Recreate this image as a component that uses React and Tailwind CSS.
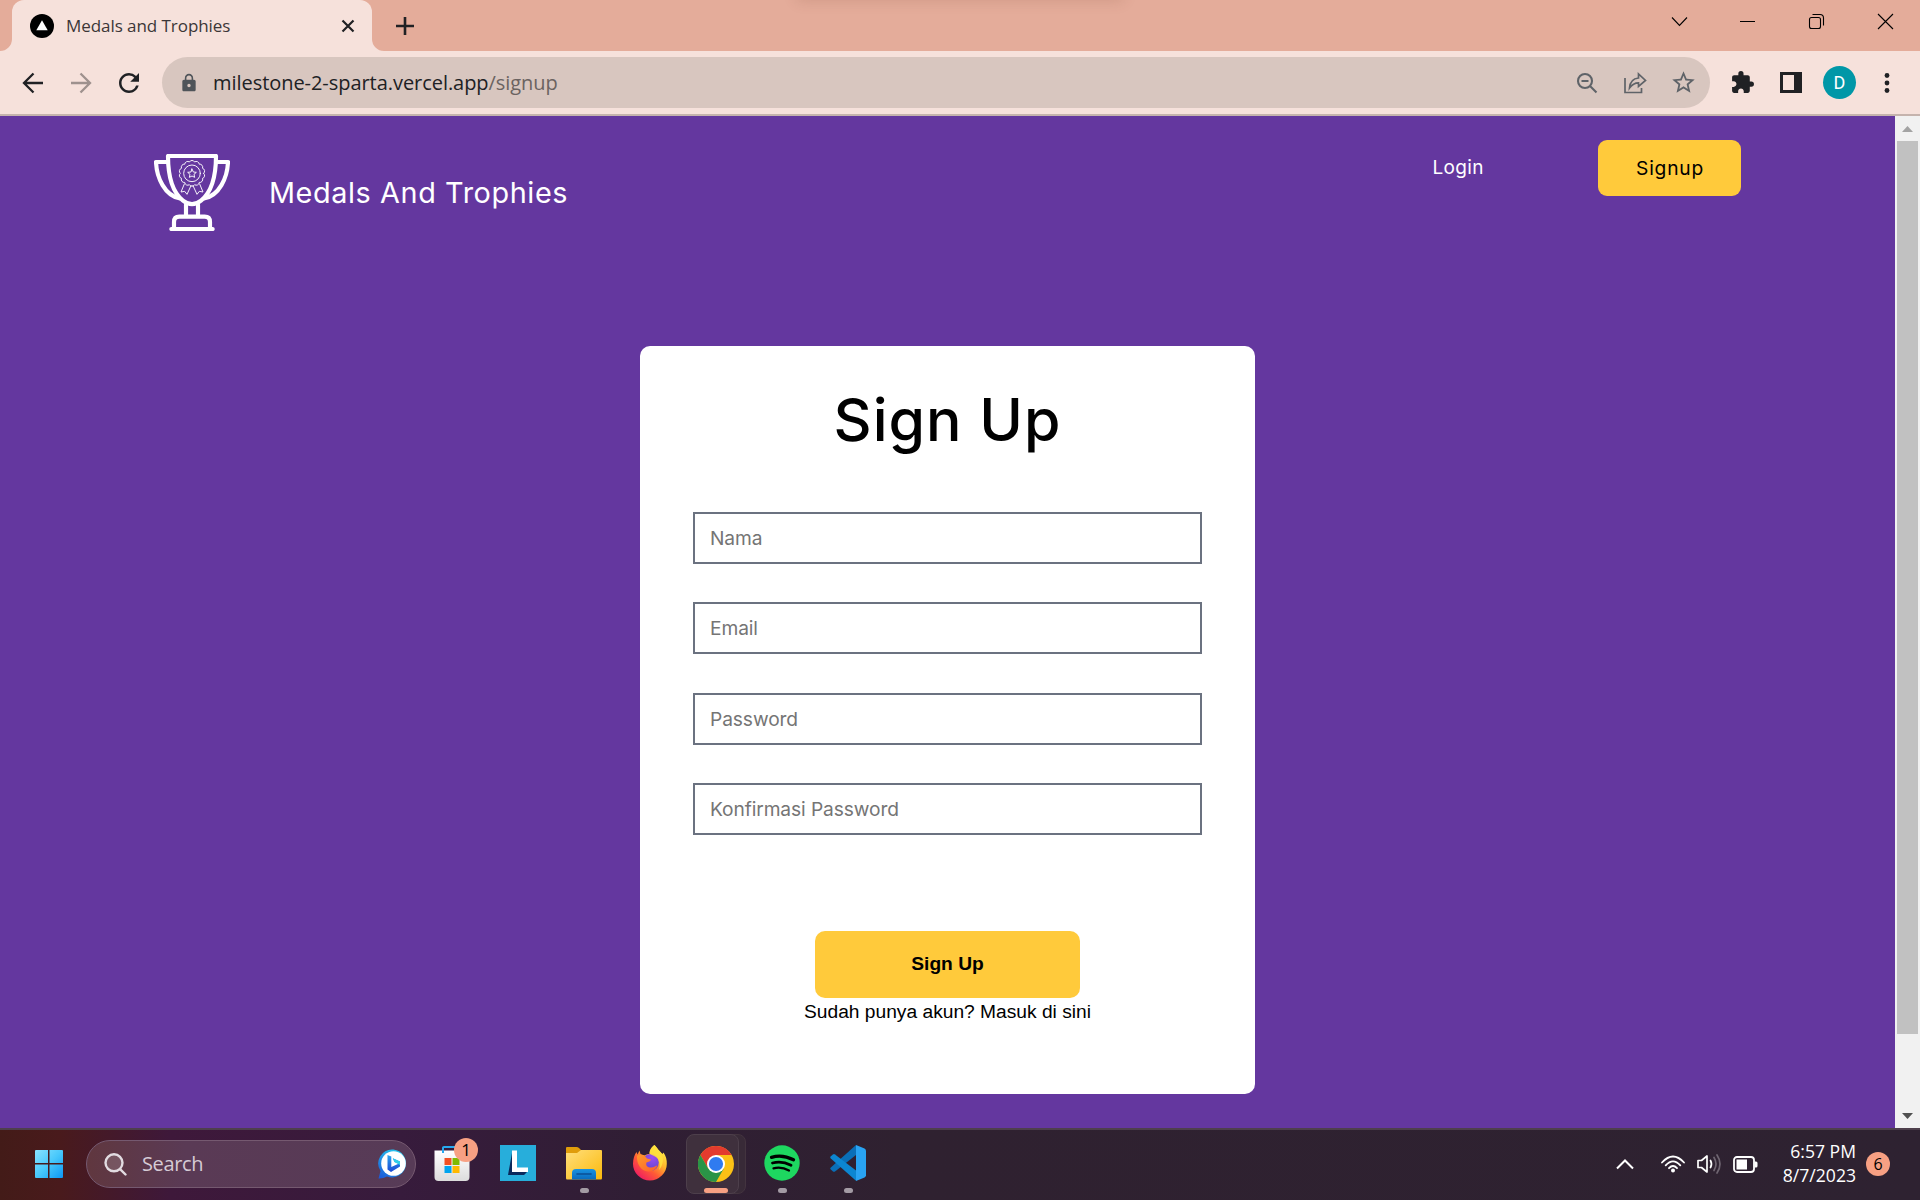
import React from "react";
import { MdExtension, MdLock, MdStarBorder, MdRefresh } from "react-icons/md";

function Stroke({ d, box, className, w = 2 }) {
  return (
    <svg viewBox={box} className={className} fill="none" stroke="currentColor" strokeWidth={w}>
      <path d={d} />
    </svg>
  );
}

function TitleBar() {
  return (
    <div className="relative flex h-[51px] shrink-0 overflow-hidden bg-[#e4ac9a] text-[#202124]">
      <div className="absolute -top-[12px] left-[800px] h-[10px] w-[320px] shadow-[0_0_14px_3px_rgba(120,70,50,0.18)]" />
      <svg viewBox="0 0 12 12" className="h-3 w-3 self-end fill-[#f6e1db]">
        <path d="M12 0V12H0A12 12 0 0 0 12 0Z" />
      </svg>
      <div className="flex w-[360px] items-center rounded-t-xl bg-[#f6e1db] pl-[18px] pr-[17px]">
        <svg viewBox="0 0 24 24" className="h-6 w-6">
          <circle cx="12" cy="12" r="12" />
          <path d="M12 6.3 17.7 16.2H6.3Z" fill="#fff" />
        </svg>
        <span className="ml-3 grow whitespace-nowrap text-[17px] leading-6 tracking-[-0.06px] text-[#3b3637]">
          Medals and Trophies
        </span>
        <Stroke box="0 0 14 14" className="h-[14px] w-[14px]" w={2.2} d="M1.5 1.5 12.5 12.5M12.5 1.5 1.5 12.5" />
      </div>
      <svg viewBox="0 0 12 12" className="h-3 w-3 self-end fill-[#f6e1db]">
        <path d="M0 0V12H12A12 12 0 0 1 0 0Z" />
      </svg>
      <Stroke box="0 0 18 18" className="ml-3 mt-[17px] h-[18px] w-[18px]" w={2.6} d="M9 0V18M0 9H18" />
      <div className="ml-auto flex pr-[26px] pt-[13px] text-black">
        <Stroke box="0 0 17 17" className="mr-[51px] h-[17px] w-[17px]" w={1.1} d="M1 4.500 8.500 12.500 16 4.500" />
        <Stroke box="0 0 17 17" className="mr-[52px] h-[17px] w-[17px]" w={1} d="M1 8.500H16" />
        <Stroke
          box="0 0 17 17"
          className="mr-[52px] h-[17px] w-[17px]"
          w={1.1}
          d="M3.5 4.5H10.5Q12.5 4.5 12.5 6.5V13.5Q12.5 15.5 10.5 15.5H3.5Q1.5 15.5 1.5 13.5V6.5Q1.5 4.5 3.5 4.5ZM4.5 1.5H12Q15.5 1.5 15.5 5V12.5"
        />
        <Stroke box="0 0 17 17" className="h-[17px] w-[17px]" w={1.1} d="M1 1 16 16M16 1 1 16" />
      </div>
    </div>
  );
}

function Toolbar() {
  return (
    <div className="flex h-[65px] shrink-0 items-center border-b-2 border-[#c5b3ad] bg-[#f6e1db] pl-[22px] text-[#202124]">
      <Stroke box="0 0 22 22" className="h-[22px] w-[22px]" w={2.3} d="M21 11H2.5M11.5 1.5 2 11 11.5 20.5" />
      <Stroke box="0 0 22 22" className="ml-[26px] h-[22px] w-[22px] text-[#9e918e]" w={2.3} d="M1 11H19.5M10.5 1.5 20 11 10.5 20.5" />
      <MdRefresh className="ml-[22px] h-[30px] w-[30px]" />
      <div className="ml-[18px] flex h-[51px] w-[1548px] items-center rounded-full bg-[#d8c6bf] pl-[17px] pr-[13px] text-[#5f6368]">
        <MdLock className="h-5 w-5 text-[#4f5459]" />
        <span className="ml-[14px] whitespace-nowrap text-xl leading-6 tracking-[-0.05px] text-[#6b6361]">
          <span className="text-[#202124]">milestone-2-sparta.vercel.app</span>/signup
        </span>
        <Stroke box="0 0 22 22" className="ml-auto h-[22px] w-[22px]" w={2.1} d="M9 2A7 7 0 1 0 9 16A7 7 0 1 0 9 2ZM5.5 9H12.5M14 14 20.5 20.5" />
        <svg viewBox="0 0 24 24" className="ml-[25px] h-6 w-6" fill="none" stroke="currentColor" strokeWidth="1.7">
          <path d="M2 7V21.500H18.500V17" />
          <path d="M6.500 17C7 11 10 7.500 15.500 7V3L22.500 9.500 15.500 15.500V11.800C11.500 11.800 9 13.500 6.500 17Z" />
        </svg>
        <MdStarBorder className="ml-[23px] h-[27px] w-[27px]" />
      </div>
      <MdExtension className="ml-[20px] h-[25px] w-[25px]" />
      <svg viewBox="0 0 22 21" className="ml-[25px] h-[21px] w-[22px]">
        <path fill="currentColor" fillRule="evenodd" d="M0 0H22V21H0ZM3 3V18H14V3Z" />
      </svg>
      <div className="ml-[21px] flex h-[33px] w-[33px] items-center justify-center rounded-full bg-[#0097a7] font-['Roboto'] text-lg text-white">D</div>
      <svg viewBox="0 0 6 20" className="ml-7 h-5 w-[6px] fill-current">
        <circle cx="3" cy="2.500" r="2.400" />
        <circle cx="3" cy="10" r="2.400" />
        <circle cx="3" cy="17.500" r="2.400" />
      </svg>
    </div>
  );
}

function Trophy() {
  const scallops = Array.from({ length: 14 }, (_, i) => {
    const a = (i / 14) * Math.PI * 2;
    const b = ((i + 1) / 14) * Math.PI * 2;
    const p = (t) => `${(216 + 35 * Math.cos(t)).toFixed(1)} ${(130 + 35 * Math.sin(t)).toFixed(1)}`;
    return `${i ? "" : `M${p(a)}`}A9 9 0 0 1 ${p(b)}`;
  }).join("");
  return (
    <svg viewBox="102 72 228 231" className="h-[77px] w-[76px]" fill="none" stroke="#fff" strokeLinejoin="round" strokeLinecap="round">
      <g strokeWidth="12.500">
        <path d="M144 78H288C288 135 279 183 243 212Q216 233 189 212C153 183 144 135 144 78Z" />
        <path d="M144 96H108C110 145 135 196 178 205M288 96H324C322 145 297 196 254 205" />
        <path d="M198 224V258M234 224V258" />
        <path d="M162 292V276Q162 260 178 260H254Q270 260 270 276V292M154 297H278" />
      </g>
      <g strokeWidth="2.800">
        <path d={scallops} />
        <circle cx="216" cy="130" r="25" />
        <path d="M216 117 220 126 229 127 222 133 224 142 216 138 208 142 210 133 203 127 212 126Z" />
        <path d="M193 162 183 186 194 184 201 193 213 167M239 162 249 186 238 184 231 193 219 167" />
      </g>
    </svg>
  );
}

function SiteHeader() {
  return (
    <header className="flex h-[230px] items-start pl-[154px] pr-[154px] font-['Inter',sans-serif]">
      <div className="mt-[38px] flex items-center">
        <Trophy />
        <span className="ml-[39px] whitespace-nowrap text-[28.8px] leading-10 tracking-[0.6px] text-white">Medals And Trophies</span>
      </div>
      <nav className="ml-auto mt-6 flex h-14 items-center text-[19px]">
        <span className="mr-[114px] tracking-[0.4px] text-white">Login</span>
        <button className="h-14 w-[143px] rounded-[9px] bg-[#ffca3b] pl-px text-[19.2px] tracking-[0.8px] text-black">Signup</button>
      </nav>
    </header>
  );
}

const FIELDS = ["Nama", "Email", "Password", "Konfirmasi Password"];

function SignUpCard() {
  return (
    <form className="mx-auto flex h-[748px] w-[615px] flex-col items-center rounded-[10px] bg-white pt-[38px] text-black">
      <h1 className="font-['Inter',sans-serif] text-[59px] font-medium leading-[72px] tracking-[1px]">Sign Up</h1>
      <div className="mt-14 flex flex-col gap-[38.4px]">
        {FIELDS.map((f) => (
          <input
            key={f}
            placeholder={f}
            className="h-[52px] w-[509px] border-2 border-[#6b7280] bg-white pl-[15px] font-['Inter',sans-serif] text-[19.2px] tracking-[-0.1px] placeholder:text-[#757575]"
          />
        ))}
      </div>
      <button type="button" className="mt-24 h-[67px] w-[265px] rounded-[10px] bg-[#ffca3b] font-['Liberation_Sans',sans-serif] text-[19.2px] font-bold">
        Sign Up
      </button>
      <p className="whitespace-nowrap font-['Liberation_Sans',sans-serif] text-[19.2px] leading-[27px]">Sudah punya akun? Masuk di sini</p>
    </form>
  );
}

function Scrollbar() {
  return (
    <div className="flex w-[25px] shrink-0 flex-col items-center bg-[#f1f1f1]">
      <svg viewBox="0 0 25 25" className="h-[25px] w-[25px]">
        <path d="M7 16 12.500 10 18 16Z" fill="#a3a3a3" />
      </svg>
      <div className="h-[893px] w-[21px] bg-[#c1c1c1]" />
      <svg viewBox="0 0 25 25" className="mt-auto h-[25px] w-[25px]">
        <path d="M7 10 12.500 16 18 10Z" fill="#505050" />
      </svg>
    </div>
  );
}

function WindowsLogo() {
  return (
    <svg viewBox="0 0 28 28" className="h-7 w-7">
      <defs>
        <linearGradient id="win" x1="0" y1="0" x2="1" y2="1">
          <stop offset="0" stopColor="#8ae3ff" />
          <stop offset=".5" stopColor="#48c8fb" />
          <stop offset="1" stopColor="#0c97f5" />
        </linearGradient>
      </defs>
      <path fill="url(#win)" d="M0 1Q0 0 1 0H13V13H0ZM14.500 0H27Q28 0 28 1V13H14.500ZM0 14.500H13V28H1Q0 28 0 27ZM14.500 14.500H28V27Q28 28 27 28H14.500Z" />
    </svg>
  );
}

function Bing() {
  return (
    <svg viewBox="0 0 30 30" className="h-[30px] w-[30px]">
      <defs>
        <linearGradient id="bingRing" x1="0" y1="1" x2=".6" y2="0">
          <stop offset="0" stopColor="#1c55d8" />
          <stop offset="1" stopColor="#25c3ee" />
        </linearGradient>
        <linearGradient id="bingB" x1="0" y1="0" x2="0" y2="1">
          <stop offset="0" stopColor="#2ba4ee" />
          <stop offset="1" stopColor="#1b48d4" />
        </linearGradient>
      </defs>
      <path d="M15.500 .5A14 14 0 1 1 9 27.500Q5 29.800 .5 29.500L2.500 22A14 14 0 0 1 15.500 .5Z" fill="url(#bingRing)" />
      <circle cx="15.500" cy="14.500" r="12.300" fill="#fff" />
      <path d="M9.500 6 13.300 7.500V18L20.500 14.800 16.500 13 14.800 9.300 22 12.500V17.500L13 23 9.500 20.500Z" fill="url(#bingB)" />
      <path d="M14.800 9.300 22 12.500V16L16.500 13Z" fill="#2fcfe9" />
    </svg>
  );
}

function Store() {
  return (
    <div className="relative h-9 w-9">
      <svg viewBox="0 0 36 36" className="h-9 w-9">
        <defs>
          <linearGradient id="bag" x1="0" y1="0" x2="0" y2="1">
            <stop offset="0" stopColor="#fff" />
            <stop offset="1" stopColor="#dcdcdc" />
          </linearGradient>
        </defs>
        <path d="M9 8V3Q9 2 10 2H26Q27 2 27 3V8" fill="none" stroke="#27a9f0" strokeWidth="2" />
        <path d="M.5 5.500H35.500V32Q35.500 36 31.500 36H4.500Q.5 36 .5 32Z" fill="url(#bag)" />
        <path d="M9 2.500V8" stroke="#27a9f0" strokeWidth="2" />
        <path d="M10.500 13H17.500V20H10.500Z" fill="#f25022" />
        <path d="M18.500 13H25.500V20H18.500Z" fill="#7fba00" />
        <path d="M10.500 21H17.500V28H10.500Z" fill="#00a4ef" />
        <path d="M18.500 21H25.500V28H18.500Z" fill="#ffb900" />
      </svg>
      <span className="absolute -top-[7px] left-5 flex h-6 w-6 items-center justify-center rounded-full bg-[#f7a083] text-[17px] leading-6 text-black">1</span>
    </div>
  );
}

function LApp() {
  return (
    <svg viewBox="0 0 36 36" className="h-9 w-9">
      <path d="M0 0H36V36H0Z" fill="#27aedb" />
      <path d="M12 8 8 30H24L27 27H13Z" fill="#0a2a5c" />
      <path d="M12 5.500H17V22.500H28V27H12Z" fill="#fff" />
    </svg>
  );
}

function Folder() {
  return (
    <svg viewBox="0 0 36 36" className="h-9 w-9">
      <defs>
        <linearGradient id="fold" x1="0" y1="0" x2="1" y2="1">
          <stop offset="0" stopColor="#ffdf7c" />
          <stop offset="1" stopColor="#fbb90b" />
        </linearGradient>
        <linearGradient id="pocket" x1="0" y1="0" x2="0" y2="1">
          <stop offset="0" stopColor="#1893e2" />
          <stop offset="1" stopColor="#0a6abd" />
        </linearGradient>
      </defs>
      <path d="M0 3Q0 2 1 2H10.500Q12 2 13 3L15 5V9H0Z" fill="#e09d0b" />
      <path d="M0 8H11L15 5H35Q36 5 36 6V33Q36 34.500 35 34.500H1Q0 34.500 0 33Z" fill="url(#fold)" />
      <path d="M6 34.500V28Q6 24 10 24H26Q30 24 30 28V34.500Z" fill="url(#pocket)" />
      <path d="M11 29H25" stroke="#0b4f95" strokeWidth="1.600" strokeLinecap="round" />
    </svg>
  );
}

function Firefox() {
  return (
    <svg viewBox="0 0 36 36" className="h-9 w-9">
      <defs>
        <linearGradient id="ffBody" x1=".9" y1=".1" x2=".2" y2=".95">
          <stop offset="0" stopColor="#fff24a" />
          <stop offset=".35" stopColor="#ffb52b" />
          <stop offset=".65" stopColor="#ff5a36" />
          <stop offset="1" stopColor="#ee1c63" />
        </linearGradient>
        <radialGradient id="ffGlobe" cx=".6" cy=".2" r=".9">
          <stop offset="0" stopColor="#a04cf0" />
          <stop offset="1" stopColor="#5547c8" />
        </radialGradient>
        <linearGradient id="ffHead" x1="0" y1="0" x2="1" y2="1">
          <stop offset="0" stopColor="#ff9a2a" />
          <stop offset="1" stopColor="#ff5e2e" />
        </linearGradient>
      </defs>
      <path d="M22.500 0C24.500 2 25.500 4 28 6.500L30.500 9 31.500 7.500C34 11 35 15 34.800 19A16.900 16.400 0 0 1 1 19C1 14 2.500 9.500 4.500 7L5.500 9.500 7.500 5.500 8.500 9 12.500 10.500C14.500 9 16.500 9 17.500 9 17 5.500 19.500 2 22.500 0Z" fill="url(#ffBody)" />
      <ellipse cx="18.500" cy="17.500" rx="8.300" ry="8.500" fill="url(#ffGlobe)" />
      <path d="M5 11C7 9 10 9.500 12.500 10.500L15 13.500 19 14.500C18.500 16.500 16.500 17 14.500 17.500 13.500 20.500 15.500 22.500 19 22.500 22 22.500 24 20.500 25.500 20.500 23.500 25 20 27 16 26.500 9 26 4.500 19 5 11Z" fill="url(#ffHead)" />
      <path d="M22.500 0C24.500 2 25.500 4 28 6.500 33 12 31 21 27 25 29 18 27 13 22 11L17.800 9C17.500 5 20 2 22.500 0Z" fill="#ffe23e" opacity=".85" />
    </svg>
  );
}

function Chrome() {
  return (
    <svg viewBox="0 0 36 36" className="h-9 w-9">
      <circle cx="18" cy="18" r="18" fill="#fbc116" />
      <path d="M2.410 9A18 18 0 0 1 33.590 9H18L10.200 22.500Z" fill="#e33b2e" />
      <path d="M2.410 9A18 18 0 0 0 18 36L25.800 22.500 18 27 10.200 22.500Z" fill="#2a9447" />
      <circle cx="18" cy="18" r="9" fill="#fff" />
      <circle cx="18" cy="18" r="7.100" fill="#2f7bf0" />
    </svg>
  );
}

function Spotify() {
  return (
    <svg viewBox="0 0 36 36" className="h-9 w-9" fill="none" stroke="#000" strokeLinecap="round">
      <circle cx="18" cy="18" r="17.700" fill="#1ed760" stroke="none" />
      <path d="M7.500 12.300Q18.500 9 29.500 14.800" strokeWidth="3.300" />
      <path d="M8.500 18Q18 15.500 27 20.300" strokeWidth="2.800" />
      <path d="M9.500 23.300Q17.500 21.300 25 25.500" strokeWidth="2.300" />
    </svg>
  );
}

function VSCode() {
  return (
    <svg viewBox="0 0 36 36" className="h-9 w-9">
      <path d="M.8 22.500 26 0V10L5 26.500Q4 27.200 3 26.500L.8 24.600Q-.3 23.500 .8 22.500Z" fill="#0a6fb8" />
      <path d="M.8 13.500Q-.3 12.500 .8 11.300L3 9.400Q4 8.800 5 9.500L26 25.500V35.800Z" fill="#0c86d1" />
      <path d="M26 0 34.500 3.500Q36 4.200 36 5.700V30.300Q36 31.800 34.500 32.500L26 36Z" fill="#29a3f2" />
    </svg>
  );
}

function AppSlot({ children, dot }) {
  return (
    <div className="relative flex h-full w-[66px] items-center justify-center pb-0.5">
      {children}
      {dot && <span className="absolute bottom-[5px] left-[29px] h-[5px] w-[9px] rounded-full bg-[#a39ba4]" />}
    </div>
  );
}

function Taskbar() {
  return (
    <div className="flex h-[72px] shrink-0 items-center border-t-2 border-[#4e3f4c] bg-[linear-gradient(90deg,#431b18_0px,#491a1c_60px,#3e183a_170px,#371b3c_400px,#301e34_640px,#2f2130_900px,#2e2231_100%)] pb-0.5">
      <div className="ml-[35px]">
        <WindowsLogo />
      </div>
      <div className="ml-[23px] flex h-12 w-[330px] items-center rounded-full border border-[#755970] bg-[linear-gradient(90deg,#60373f,#5a3a55_30%,#573b57)] pl-[17px] pr-[7px]">
        <svg viewBox="0 0 23 23" className="h-[23px] w-[23px]" fill="rgba(255,255,255,0.15)" stroke="#e2dce1" strokeWidth="2.400" strokeLinecap="round">
          <circle cx="10" cy="9.800" r="8.500" />
          <path d="M16.300 16.300 21.500 21.500" />
        </svg>
        <span className="ml-[15px] text-xl leading-6 tracking-[-0.35px] text-[#d6cbd5]">Search</span>
        <div className="ml-auto">
          <Bing />
        </div>
      </div>
      <div className="ml-[3px] flex h-full">
        <AppSlot><Store /></AppSlot>
        <AppSlot><LApp /></AppSlot>
        <AppSlot dot><Folder /></AppSlot>
        <AppSlot><Firefox /></AppSlot>
        <div className="flex h-full w-[66px] items-start pl-[3px] pt-1">
          <div className="relative z-10 flex h-[60px] w-[53px] shrink-0 items-start justify-center rounded-lg border border-[#4d3f4b] bg-[#3f303d] pl-[7px] pt-[11px]">
            <div className="-ml-[1px]">
              <Chrome />
            </div>
            <span className="absolute bottom-0 left-[17px] h-[5px] w-6 rounded-full bg-[#f7a083]" />
          </div>
          <div className="-ml-[46px] h-[60px] w-[53px] shrink-0 rounded-lg border border-[#43343f] bg-[#382a37]" />
        </div>
        <AppSlot dot><Spotify /></AppSlot>
        <AppSlot dot><VSCode /></AppSlot>
      </div>
      <div className="ml-auto flex items-center pr-[30px] text-white">
        <Stroke box="0 0 18 12" className="mr-[27px] h-3 w-[18px]" w={2} d="M1 10.500 9 2.500 17 10.500" />
        <svg viewBox="0 0 24 18" className="mr-3 h-[18px] w-6" fill="none" stroke="#fff" strokeWidth="1.800" strokeLinecap="round">
          <path d="M1 7.500Q12 -4.500 23 7.500M4.700 10.300Q12 2.300 19.300 10.300M8 13.200Q12 8.800 16 13.200" />
          <circle cx="12" cy="15.500" r="2" fill="#fff" stroke="none" />
        </svg>
        <svg viewBox="0 0 25 22" className="mr-[11px] h-[22px] w-[25px]" fill="none" stroke="#fff" strokeWidth="1.700" strokeLinejoin="round" strokeLinecap="round">
          <path d="M1 7.500H4.500L10 3V19L4.500 14.500H1Z" />
          <path d="M13.500 7.500Q15.500 11 13.500 14.500" />
          <path d="M17 4.500Q21 11 17 17.500M20 2Q26 11 20 20" stroke="#6f6571" />
        </svg>
        <svg viewBox="0 0 25 17" className="mr-6 h-[17px] w-[25px]">
          <rect x="1" y="1" width="20" height="15" rx="3" fill="none" stroke="#fff" strokeWidth="1.800" />
          <path d="M3.500 3.500H14V13.500H3.500ZM21.500 5.500H23Q24.500 5.500 24.500 7V10Q24.500 11.500 23 11.500H21.500Z" fill="#fff" />
        </svg>
        <div className="flex w-[74px] flex-col items-end whitespace-nowrap pb-[2px] text-[17.600px] leading-[24px]">
          <div>6:57 PM</div>
          <div>8/7/2023</div>
        </div>
        <div className="ml-[10px] flex h-6 w-6 items-center justify-center rounded-full bg-[#f7a083] text-[16px] leading-6 text-black">6</div>
      </div>
    </div>
  );
}

export default function App() {
  return (
    <div className="flex h-[1200px] w-[1920px] flex-col overflow-hidden font-['Open_Sans',sans-serif]">
      <TitleBar />
      <Toolbar />
      <div className="flex min-h-0 grow">
        <main className="grow bg-[#64379f]">
          <SiteHeader />
          <SignUpCard />
        </main>
        <Scrollbar />
      </div>
      <Taskbar />
    </div>
  );
}
